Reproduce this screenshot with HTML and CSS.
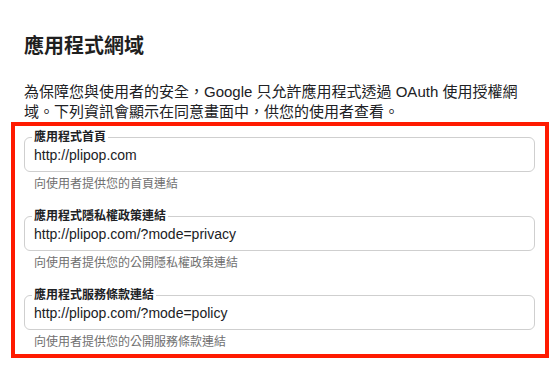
FILE: index.html
```html
<!DOCTYPE html>
<html lang="zh-Hant">
<head>
<meta charset="utf-8">
<link rel="stylesheet" href="styles.css">
</head>
<body>
<div class="page">
  <h1 class="title">應用程式網域</h1>
  <p class="desc">為保障您與使用者的安全，Google 只允許應用程式透過 OAuth 使用授權網域。下列資訊會顯示在同意畫面中，供您的使用者查看。</p>
  <div class="box">
    <div class="field">
      <div class="outline">
        <span class="label">應用程式首頁</span>
        <span class="value">http://plipop.com</span>
      </div>
      <div class="hint">向使用者提供您的首頁連結</div>
    </div>
    <div class="field">
      <div class="outline">
        <span class="label">應用程式隱私權政策連結</span>
        <span class="value">http://plipop.com/?mode=privacy</span>
      </div>
      <div class="hint">向使用者提供您的公開隱私權政策連結</div>
    </div>
    <div class="field">
      <div class="outline">
        <span class="label">應用程式服務條款連結</span>
        <span class="value">http://plipop.com/?mode=policy</span>
      </div>
      <div class="hint">向使用者提供您的公開服務條款連結</div>
    </div>
  </div>
</div>
</body>
</html>
```
FILE: styles.css
```css
* { box-sizing: border-box; }
html, body { margin: 0; padding: 0; background: #fff; }
body {
  font-family: "Liberation Sans", "Noto Sans CJK TC", sans-serif;
  color: #202124;
  width: 560px;
  height: 380px;
  overflow: hidden;
  text-spacing-trim: space-all;
}
.page {
  padding: 32px 11px 0 11px;
}
.title {
  margin: 0 13px;
  font-size: 20px;
  line-height: 28px;
  font-weight: 700;
  color: #1f1f1f;
}
.desc {
  margin: 22px 13px 0 13px;
  font-size: 15px;
  line-height: 20px;
}
.box {
  border: 4px solid #ff1a00;
  padding: 11px 10px 4px 9px;
}
.field + .field { margin-top: 24px; }
.outline {
  position: relative;
  height: 35px;
  border: 1px solid #cfcfcf;
  border-radius: 6px;
  display: flex;
  align-items: center;
  padding: 0 9px;
}
.label {
  position: absolute;
  top: -8px;
  left: 7px;
  padding: 0 2px;
  background: #fff;
  font-size: 12px;
  line-height: 14px;
  font-weight: 700;
  color: #202124;
}
.value {
  font-size: 14px;
  color: #202124;
  padding-top: 1px;
}
.hint {
  margin-top: 4px;
  padding-left: 10px;
  font-size: 12px;
  line-height: 16px;
  color: #707070;
}
```
